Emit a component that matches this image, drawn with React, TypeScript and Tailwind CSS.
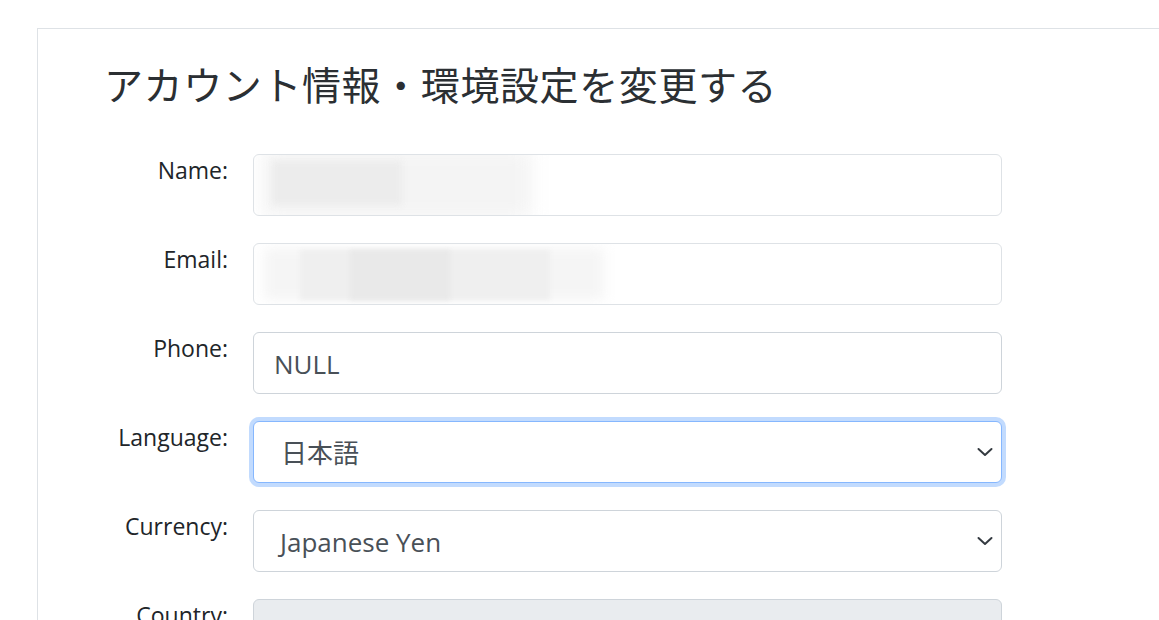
const font = { fontFamily: '"Open Sans", "Noto Sans CJK JP", sans-serif' };

function Label({ children }: { children: string }) {
  return (
    <label className="text-right text-[23px] leading-[1.5] text-[#212529] mt-[-1px] whitespace-nowrap">{children}</label>
  );
}

function Chevron() {
  return (
    <svg width="16" height="10" viewBox="0 0 16 10" fill="none" className="shrink-0 mt-[-2px]">
      <path d="M1.5 2 8 8l6.5-6" stroke="#343a40" strokeWidth="2" strokeLinecap="round" strokeLinejoin="round" />
    </svg>
  );
}

export default function App() {
  return (
    <div className="min-h-screen bg-white pt-[28px] pl-[37px] overflow-hidden" style={font}>
      <div className="border-l border-t border-[#dee2e6] pl-[66px] pt-[33px] h-[620px]">
        <h2 className="text-[39px] leading-[1.2] text-[#2b2f33] tracking-[0.6px]">
          アカウント情報・環境設定を変更する
        </h2>

        <div className="mt-[45px] ml-[3px] grid grid-cols-[121px_749px] gap-x-[25px] gap-y-[27px]">
          {/* Name */}
          <Label>Name:</Label>
          <div className="relative h-[62px] rounded-[6px] border border-[#dee2e6] bg-white overflow-hidden">
            <div className="absolute left-[8px] top-[-6px] h-[70px] w-[270px] bg-[#f4f4f4] blur-[10px]" />
            <div className="absolute left-[18px] top-[6px] h-[44px] w-[130px] bg-[#ececec] blur-[3px]" />
          </div>

          {/* Email */}
          <Label>Email:</Label>
          <div className="relative h-[62px] rounded-[6px] border border-[#dee2e6] bg-white overflow-hidden">
            <div className="absolute left-[10px] top-[4px] h-[52px] w-[340px] bg-[#f5f5f5] blur-[6px]" />
            <div className="absolute left-[46px] top-[6px] h-[50px] w-[250px] bg-[#efefef] blur-[2px]" />
            <div className="absolute left-[96px] top-[6px] h-[50px] w-[100px] bg-[#e9e9e9] blur-[2px]" />
          </div>

          {/* Phone */}
          <Label>Phone:</Label>
          <div className="h-[62px] rounded-[6px] border border-[#ced4da] bg-white flex items-center pl-[20px] pt-[3px] text-[26px] text-[#495057]">
            NULL
          </div>

          {/* Language */}
          <Label>Language:</Label>
          <div className="h-[62px] rounded-[6px] border border-[#86b7fe] bg-white flex items-center justify-between pl-[27px] pr-[8px] pt-[3px] text-[26px] text-[#495057] shadow-[0_0_0_4px_rgba(13,110,253,0.25)]">
            <span>日本語</span>
            <Chevron />
          </div>

          {/* Currency */}
          <Label>Currency:</Label>
          <div className="h-[62px] rounded-[6px] border border-[#ced4da] bg-white flex items-center justify-between pl-[26px] pr-[8px] pt-[3px] text-[26px] text-[#495057]">
            <span>Japanese Yen</span>
            <Chevron />
          </div>

          {/* Country */}
          <Label>Country:</Label>
          <div className="h-[62px] rounded-[6px] border border-[#ced4da] bg-[#e9ecef]" />
        </div>
      </div>
    </div>
  );
}
